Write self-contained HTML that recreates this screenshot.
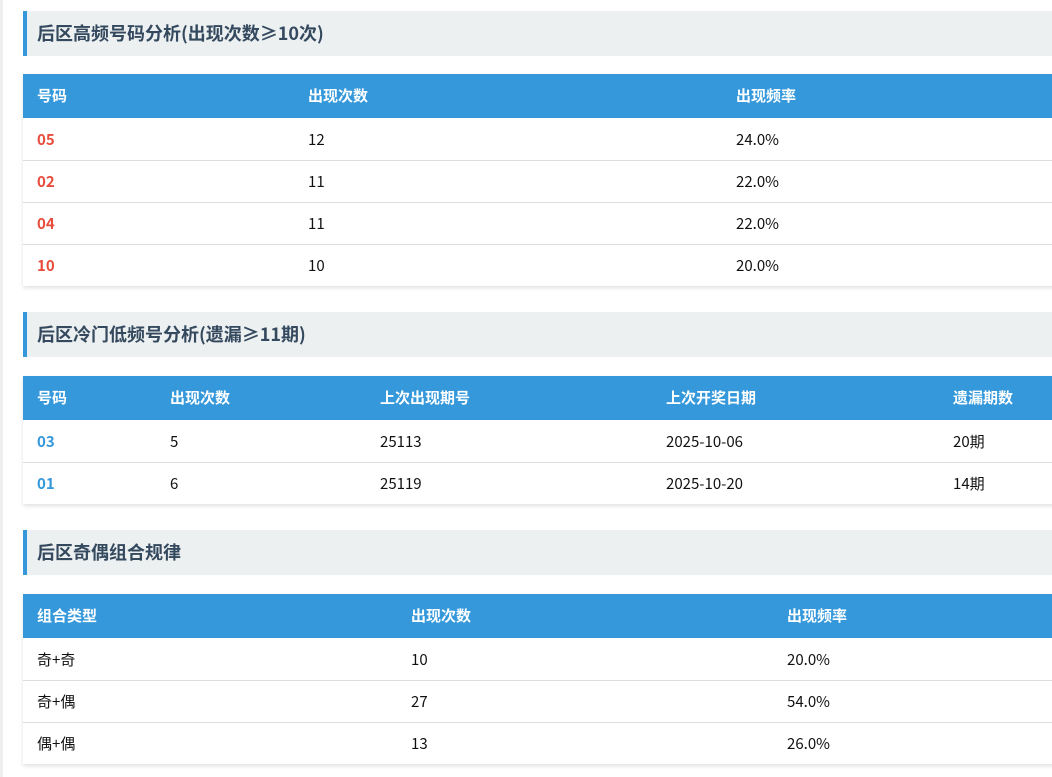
<!DOCTYPE html>
<html><head><meta charset="utf-8"><style>
*{margin:0;padding:0;box-sizing:border-box}
body{width:1052px;height:777px;overflow:hidden;background:#fff;font-family:"Noto Sans CJK SC","Liberation Sans",sans-serif;position:relative}
.strip{position:absolute;left:0;top:0;width:3px;height:777px;background:#eeeeee}
.h{position:absolute;left:23px;width:1040px;height:45px;background:#ecf0f1;border-left:4px solid #3498db;color:#34495e;font-weight:bold;font-size:18px;line-height:45px;padding-left:10px}
table{position:absolute;left:23px;width:1040px;border-collapse:collapse;box-shadow:0 2px 4px rgba(0,0,0,0.12);table-layout:fixed}
th{background:#3498db;color:#fff;font-weight:bold;font-size:15px;height:44px;line-height:20px;text-align:left;padding-left:14px}
td{height:42px;font-size:15px;line-height:20px;color:#111;padding-left:14px;padding-top:2px;border-top:1px solid #ddd}
tr:nth-child(2) td{border-top:none}
.r{color:#e74c3c;font-weight:bold}
.b{color:#3498db;font-weight:bold}
</style></head><body>
<div class="strip"></div>
<div class="h" style="top:11px">后区高频号码分析(出现次数≥10次)</div>
<table style="top:74px"><colgroup><col style="width:271px"><col style="width:428px"><col></colgroup>
<tr><th>号码</th><th>出现次数</th><th>出现频率</th></tr>
<tr><td class="r">05</td><td>12</td><td>24.0%</td></tr>
<tr><td class="r">02</td><td>11</td><td>22.0%</td></tr>
<tr><td class="r">04</td><td>11</td><td>22.0%</td></tr>
<tr><td class="r">10</td><td>10</td><td>20.0%</td></tr>
</table>
<div class="h" style="top:312px">后区冷门低频号分析(遗漏≥11期)</div>
<table style="top:376px"><colgroup><col style="width:133px"><col style="width:210px"><col style="width:286px"><col style="width:287px"><col></colgroup>
<tr><th>号码</th><th>出现次数</th><th>上次出现期号</th><th>上次开奖日期</th><th>遗漏期数</th></tr>
<tr><td class="b">03</td><td>5</td><td>25113</td><td>2025-10-06</td><td>20期</td></tr>
<tr><td class="b">01</td><td>6</td><td>25119</td><td>2025-10-20</td><td>14期</td></tr>
</table>
<div class="h" style="top:530px">后区奇偶组合规律</div>
<table style="top:594px"><colgroup><col style="width:374px"><col style="width:376px"><col></colgroup>
<tr><th>组合类型</th><th>出现次数</th><th>出现频率</th></tr>
<tr><td>奇+奇</td><td>10</td><td>20.0%</td></tr>
<tr><td>奇+偶</td><td>27</td><td>54.0%</td></tr>
<tr><td>偶+偶</td><td>13</td><td>26.0%</td></tr>
</table>
</body></html>
